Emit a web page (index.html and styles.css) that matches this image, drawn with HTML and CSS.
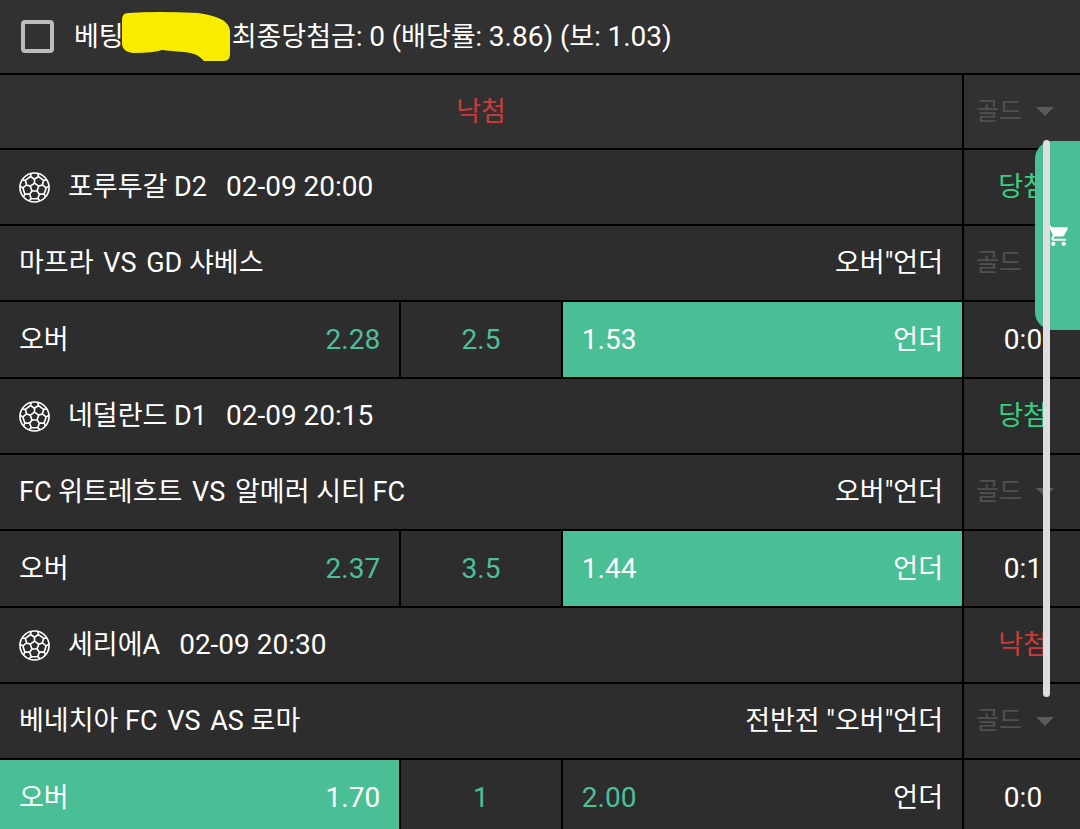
FILE: index.html
```html
<!DOCTYPE html>
<html lang="ko">
<head>
    <meta charset="UTF-8">
    <meta name="viewport" content="width=device-width, initial-scale=1.0">
    <title>베팅내역</title>
    <link rel="stylesheet" href="styles.css">
</head>
<body>
    <!-- soccer ball, one fifth is drawn and rotated -->
    <svg class="defs" width="0" height="0" aria-hidden="true">
        <symbol id="ball" viewBox="0 0 32 32">
            <g fill="none" stroke="#fff" stroke-width="1.7" stroke-linejoin="round">
                <circle cx="16" cy="16" r="15"/>
                <path id="panel" d="M20.3 14.6L16 11.5V7.500L11.9 4.700L12.600 1.400M16 7.500L20.100 4.700L19.400 1.400M20.100 4.700L25.500 8.600"/>
                <use href="#panel" transform="rotate(72 16 16)"/>
                <use href="#panel" transform="rotate(144 16 16)"/>
                <use href="#panel" transform="rotate(216 16 16)"/>
                <use href="#panel" transform="rotate(288 16 16)"/>
            </g>
        </symbol>
    </svg>

    <main class="page">
        <header class="resumen">
            <input type="checkbox" id="bet">
            <label for="bet">베팅<svg class="mark" viewBox="0 0 108 50" aria-hidden="true"><path fill="#f8ec00" d="M6 1Q35-1 76 1Q107 5 108 19V42Q108 49 102 49H82Q76 41 62 40Q48 39 40 38Q32 41 12 41Q0 40 0 31V8Q0 1 6 1Z"/></svg>최종당첨금: <span class="num">0 </span>(배당률: <span class="num">3.86) </span>(보: <span class="num">1.03)</span></label>
        </header>

        <div class="row top">
            <div class="cell center lose">낙첨</div>
            <div class="cell side"><span class="gold"><select aria-label="골드" disabled><option>골드</option></select></span></div>
        </div>

        <section class="game">
            <div class="row">
                <div class="cell league"><svg class="ball"><use href="#ball"/></svg>포루투갈 D2 <time class="num">02-09 20:00</time></div>
                <div class="cell center result win">당첨</div>
            </div>
            <div class="row">
                <div class="cell match"><span>마프라 <span class="vs">VS</span> GD 샤베스</span><span>오버"언더</span></div>
                <div class="cell side"><span class="gold"><select aria-label="골드" disabled><option>골드</option></select></span></div>
            </div>
            <div class="row odds-row">
                <div class="odds">
                    <button type="button"><span>오버</span><span class="num">2.28</span></button>
                    <div class="line num">2.5</div>
                    <button type="button" class="selected"><span class="num">1.53</span><span>언더</span></button>
                </div>
                <div class="cell center result num">0:0</div>
            </div>
        </section>

        <section class="game">
            <div class="row">
                <div class="cell league"><svg class="ball"><use href="#ball"/></svg>네덜란드 D1 <time class="num">02-09 20:15</time></div>
                <div class="cell center result win">당첨</div>
            </div>
            <div class="row">
                <div class="cell match"><span>FC 위트레흐트 <span class="vs">VS</span> 알메러 시티 FC</span><span>오버"언더</span></div>
                <div class="cell side"><span class="gold"><select aria-label="골드" disabled><option>골드</option></select></span></div>
            </div>
            <div class="row odds-row">
                <div class="odds">
                    <button type="button"><span>오버</span><span class="num">2.37</span></button>
                    <div class="line num">3.5</div>
                    <button type="button" class="selected"><span class="num">1.44</span><span>언더</span></button>
                </div>
                <div class="cell center result num">0:1</div>
            </div>
        </section>

        <section class="game">
            <div class="row">
                <div class="cell league"><svg class="ball"><use href="#ball"/></svg>세리에A <time class="num">02-09 20:30</time></div>
                <div class="cell center result lose">낙첨</div>
            </div>
            <div class="row">
                <div class="cell match"><span>베네치아 FC <span class="vs">VS</span> AS 로마</span><span>전반전 "오버"언더</span></div>
                <div class="cell side"><span class="gold"><select aria-label="골드" disabled><option>골드</option></select></span></div>
            </div>
            <div class="row odds-row">
                <div class="odds">
                    <button type="button" class="selected"><span>오버</span><span class="num">1.70</span></button>
                    <div class="line num">1</div>
                    <button type="button"><span class="num">2.00</span><span>언더</span></button>
                </div>
                <div class="cell center result num">0:0</div>
            </div>
        </section>
    </main>

    <button type="button" class="cart" aria-label="장바구니">
        <svg viewBox="0 0 24 24"><path fill="#fff" d="M7 18c-1.100 0-2 .9-2 2s.9 2 2 2 2-.9 2-2-.9-2-2-2zM1 2v2h2l3.600 7.590-1.350 2.450C4.520 15.370 5.480 17 7 17h12v-2H7.420c-.14 0-.25-.11-.25-.25l.03-.12.900-1.630h7.450c.75 0 1.410-.41 1.750-1.030l3.580-6.490A1 1 0 0 0 20 4H5.210l-.94-2H1zm16 16c-1.100 0-2 .9-2 2s.9 2 2 2 2-.9 2-2-.9-2-2-2z"/></svg>
    </button>
    <div class="thumb"></div>
</body>
</html>
```
FILE: styles.css
```css
* {
    box-sizing: border-box;
}
body {
    margin: 0;
    background: #000;
    color: #fff;
    font-family: Roboto, "Noto Sans CJK KR", sans-serif;
    font-size: 27px;
    line-height: 40px;
}
button, select {
    font: inherit;
    color: inherit;
    border: 0;
    margin: 0;
}
.defs {
    position: absolute;
}
.page {
    display: flex;
    flex-direction: column;
    gap: 2px;
    height: 100vh;
    overflow: hidden;
}
.page > * {
    flex-shrink: 0;
}
.num {
    font-size: 28px;
}

/* cabecera */
.resumen {
    display: flex;
    align-items: center;
    gap: 20px;
    height: 73px;
    padding: 0 21px;
    background: #313131;
}
.resumen input {
    appearance: none;
    width: 33px;
    height: 33px;
    margin: 0;
    border: 4px solid #bdbbbc;
    border-radius: 4px;
}
.resumen label {
    display: flex;
    align-items: center;
    white-space: pre;
}
.mark {
    width: 108px;
    height: 50px;
    margin: 0 2px 0 -2px;
}

/* filas */
.row {
    display: grid;
    grid-template-columns: 1fr 116px;
    gap: 2px;
    height: 74px;
}
.row.top {
    height: 73px;
}
.row.odds-row {
    height: 75px;
}
.top .cell {
    background: #313131;
}
.game {
    display: flex;
    flex-direction: column;
    gap: 2px;
}
.cell {
    display: flex;
    align-items: center;
    background: #2d2d2d;
}
.center {
    justify-content: center;
}
.result {
    padding-left: 2px;
}
.win {
    color: #36cf80;
}
.lose {
    color: #cc3a3a;
}
.league {
    padding-left: 19px;
}
.ball {
    width: 31px;
    height: 31px;
    margin-right: 18px;
}
.league time {
    margin-left: 19px;
}
.match {
    justify-content: space-between;
    padding: 0 19px;
}
.vs {
    margin: 0 3px;
}

/* cuotas */
.odds {
    display: grid;
    grid-template-columns: 5fr 2fr 5fr;
    gap: 2px;
}
.odds button {
    display: flex;
    justify-content: space-between;
    align-items: center;
    padding: 0 19px;
    background: #2d2d2d;
    cursor: pointer;
}
.odds button .num, .line {
    color: #4cc09a;
}
.line {
    display: flex;
    align-items: center;
    justify-content: center;
    background: #2d2d2d;
}
.odds button.selected {
    background: #4abf96;
}
.odds button.selected .num {
    color: #fff;
}

/* select de oro */
.side {
    padding: 0 26px 0 12px;
}
.gold {
    display: flex;
    flex: 1;
    align-items: center;
    color: #505050;
}
.gold select {
    appearance: none;
    flex: 1;
    min-width: 0;
    padding: 0;
    background: none;
    font-size: 25px;
    opacity: 1;
}
.gold::after {
    content: "";
    border: 9px solid transparent;
    border-top-color: #5a5a5a;
    border-bottom: 0;
}

/* carrito flotante */
.cart {
    position: fixed;
    top: 141px;
    right: 0;
    width: 45px;
    height: 189px;
    padding: 0 0 0 11px;
    border-radius: 18px 0 0 18px;
    background: #4abf96;
    cursor: pointer;
}
.cart svg {
    display: block;
    width: 25px;
    height: 25px;
}
.thumb {
    position: fixed;
    top: 140px;
    right: 30px;
    width: 7px;
    height: 557px;
    border-radius: 4px;
    background: #dedee0;
}
```
